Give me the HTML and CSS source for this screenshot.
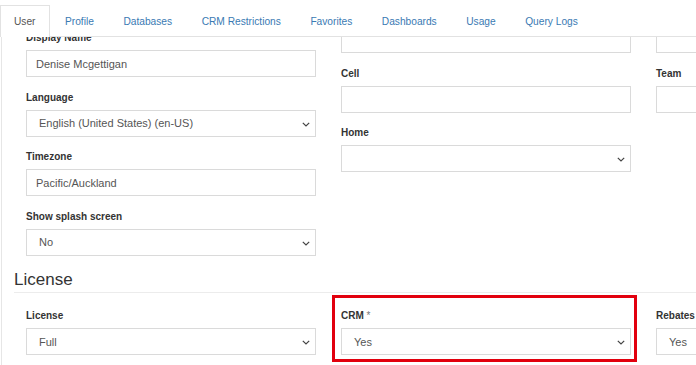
FILE: index.html
```html
<!DOCTYPE html>
<html lang="en">
<head>
    <meta charset="UTF-8">
    <title>User Settings</title>
    <link rel="stylesheet" href="styles.css">
</head>
<body>
    <!-- TABS -->
    <nav class="tabs">
        <a class="tab active">User</a>
        <a class="tab">Profile</a>
        <a class="tab">Databases</a>
        <a class="tab">CRM Restrictions</a>
        <a class="tab">Favorites</a>
        <a class="tab">Dashboards</a>
        <a class="tab">Usage</a>
        <a class="tab">Query Logs</a>
    </nav>

    <!-- USER PANEL (scrolled) -->
    <div class="panel">
        <div class="panel-inner">
            <div class="cols">
                <div class="col col-first">
                    <div class="field">
                        <label>Display Name</label>
                        <input class="control" type="text" value="Denise Mcgettigan">
                    </div>
                    <div class="field">
                        <label>Language</label>
                        <div class="select">
                            <span>English (United States) (en-US)</span>
                            <svg class="chevron" width="8" height="5" viewBox="0 0 8 5"><polyline points="0.8,0.8 4,4 7.2,0.8"/></svg>
                        </div>
                    </div>
                    <div class="field">
                        <label>Timezone</label>
                        <input class="control" type="text" value="Pacific/Auckland">
                    </div>
                    <div class="field">
                        <label>Show splash screen</label>
                        <div class="select">
                            <span>No</span>
                            <svg class="chevron" width="8" height="5" viewBox="0 0 8 5"><polyline points="0.8,0.8 4,4 7.2,0.8"/></svg>
                        </div>
                    </div>
                </div>

                <div class="col col-rest">
                    <div class="field">
                        <input class="control" type="text" value="">
                    </div>
                    <div class="field">
                        <label>Cell</label>
                        <input class="control" type="text" value="">
                    </div>
                    <div class="field">
                        <label>Home</label>
                        <div class="select">
                            <span></span>
                            <svg class="chevron" width="8" height="5" viewBox="0 0 8 5"><polyline points="0.8,0.8 4,4 7.2,0.8"/></svg>
                        </div>
                    </div>
                </div>

                <div class="col col-rest">
                    <div class="field">
                        <input class="control" type="text" value="">
                    </div>
                    <div class="field">
                        <label>Team</label>
                        <input class="control" type="text" value="">
                    </div>
                </div>
            </div>

            <!-- License Section -->
            <h2 class="section-title">License</h2>
            <div class="cols">
                <div class="field">
                    <label>License</label>
                    <div class="select">
                        <span>Full</span>
                        <svg class="chevron" width="8" height="5" viewBox="0 0 8 5"><polyline points="0.8,0.8 4,4 7.2,0.8"/></svg>
                    </div>
                </div>
                <div class="field highlight">
                    <label>CRM <span class="req">*</span></label>
                    <div class="select">
                        <span>Yes</span>
                        <svg class="chevron" width="8" height="5" viewBox="0 0 8 5"><polyline points="0.8,0.8 4,4 7.2,0.8"/></svg>
                    </div>
                </div>
                <div class="field">
                    <label>Rebates</label>
                    <div class="select">
                        <span>Yes</span>
                        <svg class="chevron" width="8" height="5" viewBox="0 0 8 5"><polyline points="0.8,0.8 4,4 7.2,0.8"/></svg>
                    </div>
                </div>
            </div>
        </div>
    </div>
</body>
</html>
```

FILE: styles.css
```css
/* Global Styles */
* {
    margin: 0;
    padding: 0;
    box-sizing: border-box;
}

body {
    font-family: "Liberation Sans", Arial, sans-serif;
    background-color: white;
    color: #333;
    width: 696px;
    height: 365px;
    overflow: hidden;
}

/* Tabs */
.tabs {
    display: flex;
    padding-top: 5px;
    border-bottom: 1px solid #e2e2e2;
    white-space: nowrap;
}

.tab {
    font-size: 10.2px;
    line-height: 31px;
    padding: 0 13px;
    margin-right: 1.5px;
    margin-bottom: -1px;
    border: 1px solid transparent;
    border-bottom: 0;
    color: #3a7ab3;
    cursor: pointer;
}

.tab.active {
    color: #555;
    background-color: white;
    border-color: #e2e2e2;
}

/* Panel */
.panel {
    height: 328px;
    margin-left: 1px;
    border-left: 1px solid #e6e6e6;
    padding-left: 12px;
    overflow: hidden;
}

.panel-inner {
    margin-top: -32px; /* content is scrolled under the tabs */
}

.cols {
    display: grid;
    grid-template-columns: 290px 290px 290px;
    column-gap: 25px;
    align-items: start;
    padding-left: 12px;
}

.col-first {
    padding-top: 25px;
}

.col-rest {
    padding-top: 21px;
}

/* Fields */
.field {
    margin-bottom: 12.5px;
}

.field label {
    display: block;
    font-size: 10px;
    font-weight: bold;
    line-height: 16px;
    margin-bottom: 4px;
    color: #333;
    white-space: nowrap;
}

.req {
    font-weight: normal;
    color: #777;
}

.control {
    display: block;
    width: 100%;
    height: 27px;
    padding: 0 9px;
    border: 1px solid #dadada;
    font-family: inherit;
    font-size: 11px;
    color: #555;
    background-color: white;
    outline: none;
}

.select {
    position: relative;
    display: flex;
    align-items: center;
    height: 27px;
    padding: 0 12px;
    border: 1px solid #dadada;
    font-size: 11px;
    color: #555;
    background-color: white;
}

.chevron {
    position: absolute;
    right: 5px;
    top: 11px;
    fill: none;
    stroke: #444;
    stroke-width: 1.2;
}

/* Section title */
.section-title {
    font-size: 17px;
    font-weight: normal;
    line-height: 20px;
    color: #333;
    margin-top: 2px;
    padding-bottom: 2px;
    border-bottom: 1px solid #ececec;
    margin-bottom: 15px;
}

/* Red annotation box */
.highlight {
    position: relative;
}

.highlight::after {
    content: "";
    position: absolute;
    top: -13px;
    bottom: -7px;
    left: -9px;
    right: -6px;
    border: 3px solid #e2000e;
}
```
